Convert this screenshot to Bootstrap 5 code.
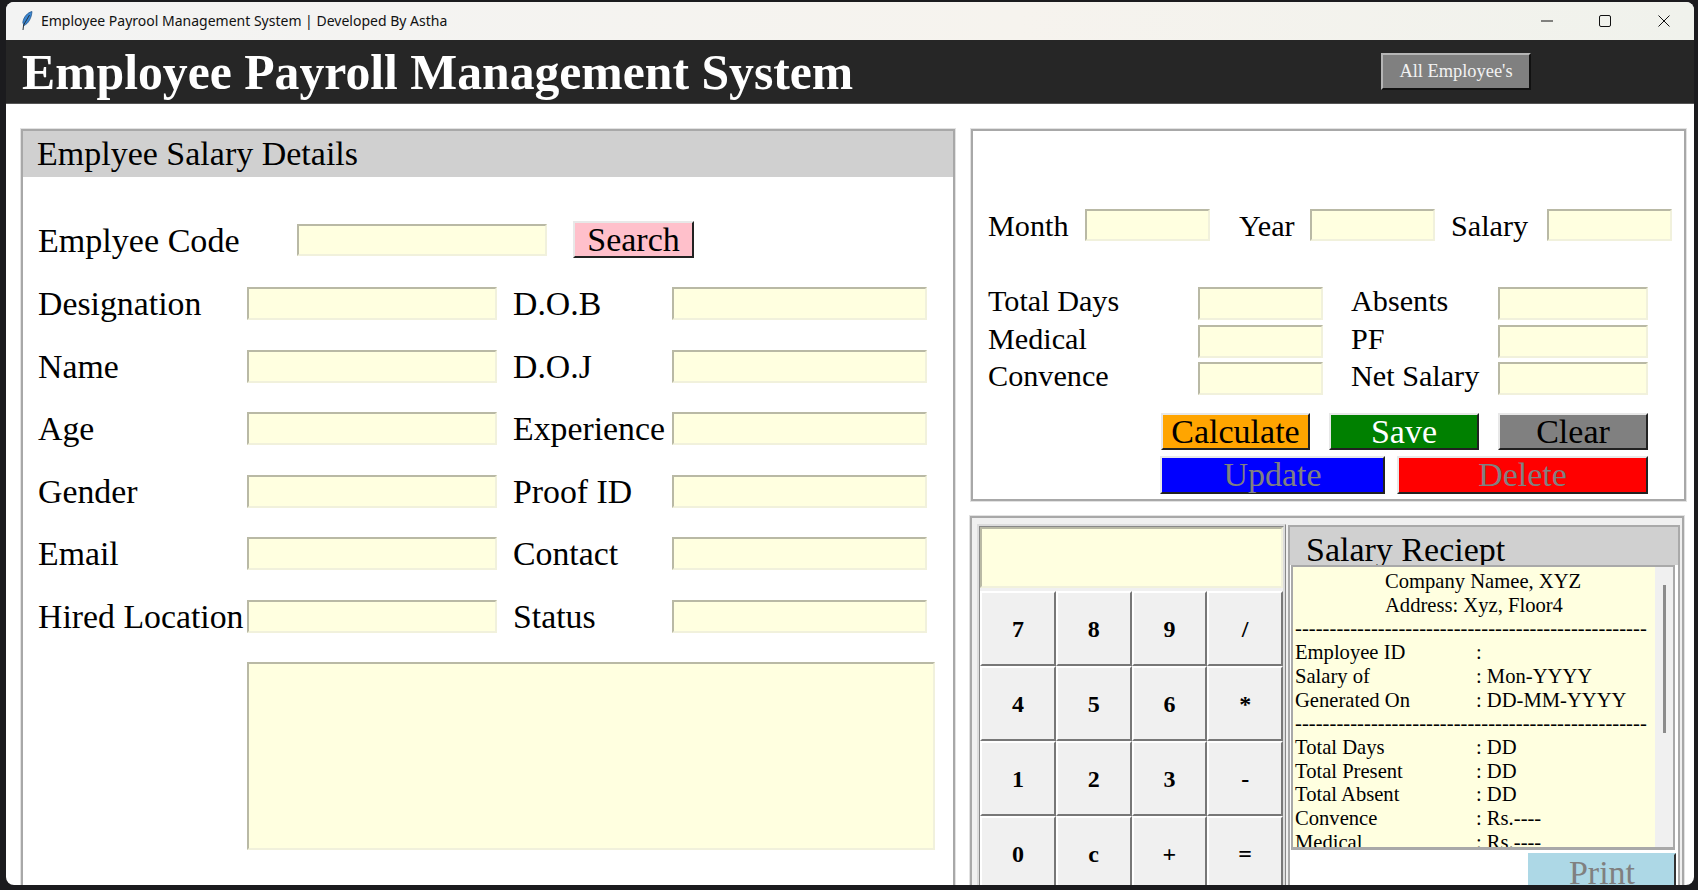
<!DOCTYPE html>
<html lang="en">

<head>
    <meta charset="UTF-8">
    <meta name="viewport" content="width=device-width, initial-scale=1.0">
    <title>Employee Payroll Management System</title>
    <link href="https://cdn.jsdelivr.net/npm/bootstrap@5.3.0/dist/css/bootstrap.min.css" rel="stylesheet">
    <style>
        html, body { height: 100%; }
        body {
            background: #1b1b1e;
            overflow: hidden;
            font-family: "Liberation Serif", "Times New Roman", serif;
            color: #000;
        }

        .app-window {
            margin: 2px 4px 0 6px;
            height: 883px;
            border-radius: 8px;
            overflow: hidden;
            background: #fff;
        }

        .title-strip {
            flex: none;
            height: 38px;
            padding-bottom: 1px;
            background: linear-gradient(90deg, #f3f3f3, #f6f3ee 60%, #f0f2ec);
            font: 14px "Noto Sans", "Liberation Sans", sans-serif;
            color: #111;
        }
        .title-text { margin-left: 8px; }
        .feather { margin-left: 15px; }
        .win-ctl { width: 58.5px; }
        .win-ctls { margin-right: 1px; }

        .top-band {
            flex: none;
            height: 64px;
            background: #262626;
            border-bottom: 1px solid #555;
        }
        .top-band h1 {
            font-family: "Liberation Serif", serif;
            font-size: 49.7px;
            font-weight: 700;
            line-height: 1;
            color: #fff;
            margin: 3px 0 0 16px;
        }

        .tk-btn {
            border-radius: 0;
            border-style: solid;
            border-width: 2px;
            border-color: #e8e8e8 #222 #222 #e8e8e8;
            padding: 0;
            font-size: 34px;
            line-height: 1;
            font-family: "Liberation Serif", serif;
        }
        .tk-btn-all {
            width: 150px;
            height: 37px;
            margin-right: 163px;
            background: #808080;
            color: #f2f2f2;
            font-size: 18.4px;
            border-color: #b5b5b5 #111 #111 #b5b5b5;
        }
        .tk-search { width: 121px; height: 37px; background: #ffc0cb; color: #000; margin-left: 26px; }
        .tk-calc { width: 149px; height: 37px; background: #ffa500; color: #000; }
        .tk-save { width: 150px; height: 37px; background: #008000; color: #fff; }
        .tk-clear { width: 150px; height: 37px; background: #808080; color: #000; }
        .tk-update { width: 225px; height: 38px; background: #0000ff; color: #808080; }
        .tk-delete { width: 251px; height: 38px; background: #ff0000; color: #808080; }
        .tk-print {
            width: 148px;
            height: 40px;
            background: #add8e6;
            color: #808080;
            border-color: #add8e6 #333 #333 #add8e6;
        }

        .main-area { flex: none; padding: 24px 0 0 14px; }

        .panel-box {
            border: 2px solid #a8a8a8;
            outline: 1px solid #e2e2e2;
            margin: 1px;
            background: #fff;
        }
        .panel-left { width: 934px; height: 778px; }
        .col-right { width: 717px; margin-left: 14px; }
        .panel-top { height: 372px; }
        .panel-bottom {
            width: 714px;
            height: 400px;
            margin: 15px 0 0;
            padding: 6px 2px 0 5px;
            background: #f0f0f0;
        }

        .panel-head {
            height: 46px;
            background: #d0d0d0;
            font-size: 34px;
            line-height: 46px;
            padding-left: 14px;
        }

        .yl-input {
            background: #ffffe0;
            border-style: solid;
            border-width: 2px;
            border-color: #b9b9a5 #f1f1dc #f1f1dc #b9b9a5;
            border-radius: 0;
            padding: 0;
            display: block;
        }
        .yl-input:focus { background: #ffffe0; border-color: #b9b9a5 #f1f1dc #f1f1dc #b9b9a5; box-shadow: none; }

        .lbl-lg { font-size: 33.8px; line-height: 33px; white-space: nowrap; }
        .lbl-md { font-size: 30.2px; line-height: 32px; white-space: nowrap; }

        .code-row { margin: 44px 0 0 15px; }
        .code-row .lbl-lg { width: 259px; font-size: 34.1px; padding-top: 2px; }
        .code-input { width: 250px; height: 32px; }

        .info-grid {
            display: grid;
            grid-template-columns: 209px 250px 175px 255px;
            grid-auto-rows: 33px;
            row-gap: 29.6px;
            margin: 29px 0 0 15px;
        }
        .info-grid .yl-input, .pay-grid .yl-input { width: 100%; height: 100%; }
        .info-grid .lbl-second { padding-left: 16px; }

        .note-area {
            width: 688px;
            height: 188px;
            margin: 29px 0 0 224px;
            resize: none;
        }

        .pay-body { padding: 78px 0 0 15px; }
        .month-row { height: 32px; }
        .month-row .yl-input { width: 125px; height: 32px; flex: none; }
        .month-row .lbl-md { padding-top: 2px; }
        .lbl-month { width: 97px; }
        .lbl-year { width: 71px; margin-left: 29px; }
        .lbl-salary { width: 96px; margin-left: 16px; }

        .pay-grid {
            display: grid;
            grid-template-columns: 210px 125px 175px 150px;
            grid-auto-rows: 33px;
            row-gap: 4.5px;
            margin-top: 46px;
        }
        .pay-grid .lbl-md { line-height: 28px; }
        .pay-grid .lbl-second { padding-left: 28px; }

        .btn-row-a { margin: 18px 0 0 173px; gap: 19px; }
        .btn-row-b { margin: 6px 0 0 172px; gap: 12px; }

        .calc-frame {
            width: 309px;
            flex: none;
            border: 3px ridge #dcdcdc;
            border-bottom: 0;
            height: 394px;
            overflow: hidden;
        }
        .calc-display { width: 303px; height: 61px; margin-bottom: 3px; }
        .calc-keys {
            display: grid;
            grid-template-columns: repeat(4, 75.75px);
            grid-auto-rows: 75px;
        }
        .calc-key {
            border-radius: 0;
            padding: 0;
            background: #f0f0f0;
            color: #000;
            font-family: "Liberation Serif", serif;
            font-size: 24px;
            font-weight: 700;
            border-style: solid;
            border-width: 2px;
            border-color: #fff #777 #777 #fff;
        }

        .receipt-frame {
            width: 392px;
            flex: none;
            margin-left: 2px;
            margin-top: 1px;
            border: 2px solid #a9a9a9;
            border-bottom: 0;
            background: #fff;
        }
        .receipt-head {
            height: 38px;
            background: #d0d0d0;
            font-size: 34px;
            line-height: 46px;
            padding-left: 16px;
            overflow: hidden;
        }
        .receipt-view {
            width: 384px;
            height: 285px;
            margin-left: 1px;
            border: 2px solid #a9a9a9;
            border-bottom-width: 3px;
        }
        .receipt-text {
            width: 362px;
            flex: none;
            background: #ffffe0;
            overflow: hidden;
            padding: 3px 0 0 2px;
            font-size: 20.6px;
            line-height: 23.7px;
            white-space: nowrap;
        }
        .rc-head { padding-left: 90px; }
        .rc-dash { letter-spacing: 0.04px; }
        .rc-label { width: 181px; flex: none; }
        .scroll-track { flex: 1; background: #f0f0f0; padding-top: 18px; }
        .scroll-thumb { width: 3px; height: 148px; background: #8c8c8c; margin: 0 auto; }
        .print-row { padding: 3px 2px 0 0; }
    </style>
</head>

<body>
    <div class="app-window d-flex flex-column">
        <div class="title-strip d-flex align-items-center">
            <svg class="feather" width="12" height="20" viewBox="0 0 12 20">
                <path d="M11 0.5C6.5 1.5 2.5 6 1.8 11.5L3 14.5C7.5 12.5 10.5 7 11 0.5Z" fill="#3b86d1" stroke="#1d4f85" stroke-width="0.7"/>
                <path d="M8.5 4L2.6 14L2 19" fill="none" stroke="#27323d" stroke-width="1"/>
            </svg>
            <span class="title-text">Employee Payrool Management System | Developed By Astha</span>
            <div class="win-ctls d-flex ms-auto">
                <div class="win-ctl d-flex justify-content-center">
                    <svg width="14" height="14" viewBox="0 0 14 14"><path d="M1 7H13" stroke="#111" stroke-width="1" fill="none"/></svg>
                </div>
                <div class="win-ctl d-flex justify-content-center">
                    <svg width="14" height="14" viewBox="0 0 14 14"><rect x="1.5" y="1.5" width="11" height="11" rx="1.5" stroke="#111" stroke-width="1" fill="none"/></svg>
                </div>
                <div class="win-ctl d-flex justify-content-center">
                    <svg width="14" height="14" viewBox="0 0 14 14"><path d="M1.5 1.5L12.5 12.5M12.5 1.5L1.5 12.5" stroke="#111" stroke-width="1" fill="none"/></svg>
                </div>
            </div>
        </div>

        <div class="top-band d-flex align-items-center justify-content-between">
            <h1>Employee Payroll Management System</h1>
            <button class="btn tk-btn tk-btn-all">All Employee's</button>
        </div>

        <div class="main-area d-flex">
            <!-- left form -->
            <div class="panel-box panel-left">
                <div class="panel-head">Emplyee Salary Details</div>
                <div class="code-row d-flex align-items-center">
                    <div class="lbl-lg">Emplyee Code</div>
                    <input class="form-control yl-input code-input" type="text">
                    <button class="btn tk-btn tk-search">Search</button>
                </div>
                <div class="info-grid">
                    <div class="lbl-lg">Designation</div><input class="form-control yl-input" type="text">
                    <div class="lbl-lg lbl-second">D.O.B</div><input class="form-control yl-input" type="text">
                    <div class="lbl-lg">Name</div><input class="form-control yl-input" type="text">
                    <div class="lbl-lg lbl-second">D.O.J</div><input class="form-control yl-input" type="text">
                    <div class="lbl-lg">Age</div><input class="form-control yl-input" type="text">
                    <div class="lbl-lg lbl-second">Experience</div><input class="form-control yl-input" type="text">
                    <div class="lbl-lg">Gender</div><input class="form-control yl-input" type="text">
                    <div class="lbl-lg lbl-second">Proof ID</div><input class="form-control yl-input" type="text">
                    <div class="lbl-lg">Email</div><input class="form-control yl-input" type="text">
                    <div class="lbl-lg lbl-second">Contact</div><input class="form-control yl-input" type="text">
                    <div class="lbl-lg">Hired Location</div><input class="form-control yl-input" type="text">
                    <div class="lbl-lg lbl-second">Status</div><input class="form-control yl-input" type="text">
                </div>
                <textarea class="form-control yl-input note-area"></textarea>
            </div>

            <div class="col-right">
                <!-- salary calc -->
                <div class="panel-box panel-top">
                    <div class="pay-body">
                        <div class="month-row d-flex align-items-center">
                            <div class="lbl-md lbl-month">Month</div>
                            <input class="form-control yl-input" type="text">
                            <div class="lbl-md lbl-year">Year</div>
                            <input class="form-control yl-input" type="text">
                            <div class="lbl-md lbl-salary">Salary</div>
                            <input class="form-control yl-input" type="text">
                        </div>
                        <div class="pay-grid">
                            <div class="lbl-md">Total Days</div><input class="form-control yl-input" type="text">
                            <div class="lbl-md lbl-second">Absents</div><input class="form-control yl-input" type="text">
                            <div class="lbl-md">Medical</div><input class="form-control yl-input" type="text">
                            <div class="lbl-md lbl-second">PF</div><input class="form-control yl-input" type="text">
                            <div class="lbl-md">Convence</div><input class="form-control yl-input" type="text">
                            <div class="lbl-md lbl-second">Net Salary</div><input class="form-control yl-input" type="text">
                        </div>
                        <div class="btn-row-a d-flex">
                            <button class="btn tk-btn tk-calc">Calculate</button>
                            <button class="btn tk-btn tk-save">Save</button>
                            <button class="btn tk-btn tk-clear">Clear</button>
                        </div>
                        <div class="btn-row-b d-flex">
                            <button class="btn tk-btn tk-update">Update</button>
                            <button class="btn tk-btn tk-delete">Delete</button>
                        </div>
                    </div>
                </div>

                <!-- calculator + receipt -->
                <div class="panel-box panel-bottom d-flex">
                    <div class="calc-frame">
                        <input class="form-control yl-input calc-display" type="text">
                        <div class="calc-keys">
                            <button class="calc-key">7</button><button class="calc-key">8</button><button class="calc-key">9</button><button class="calc-key">/</button>
                            <button class="calc-key">4</button><button class="calc-key">5</button><button class="calc-key">6</button><button class="calc-key">*</button>
                            <button class="calc-key">1</button><button class="calc-key">2</button><button class="calc-key">3</button><button class="calc-key">-</button>
                            <button class="calc-key">0</button><button class="calc-key">c</button><button class="calc-key">+</button><button class="calc-key">=</button>
                        </div>
                    </div>
                    <div class="receipt-frame">
                        <div class="receipt-head">Salary Reciept</div>
                        <div class="receipt-view d-flex">
                            <div class="receipt-text">
                                <div class="rc-head">Company Namee, XYZ</div>
                                <div class="rc-head">Address: Xyz, Floor4</div>
                                <div class="rc-dash">---------------------------------------------------</div>
                                <div class="d-flex"><span class="rc-label">Employee ID</span><span>:</span></div>
                                <div class="d-flex"><span class="rc-label">Salary of</span><span>: Mon-YYYY</span></div>
                                <div class="d-flex"><span class="rc-label">Generated On</span><span>: DD-MM-YYYY</span></div>
                                <div class="rc-dash">---------------------------------------------------</div>
                                <div class="d-flex"><span class="rc-label">Total Days</span><span>: DD</span></div>
                                <div class="d-flex"><span class="rc-label">Total Present</span><span>: DD</span></div>
                                <div class="d-flex"><span class="rc-label">Total Absent</span><span>: DD</span></div>
                                <div class="d-flex"><span class="rc-label">Convence</span><span>: Rs.----</span></div>
                                <div class="d-flex"><span class="rc-label">Medical</span><span>: Rs.----</span></div>
                            </div>
                            <div class="scroll-track"><div class="scroll-thumb"></div></div>
                        </div>
                        <div class="print-row d-flex justify-content-end">
                            <button class="btn tk-btn tk-print">Print</button>
                        </div>
                    </div>
                </div>
            </div>
        </div>
    </div>

    <script src="https://cdn.jsdelivr.net/npm/bootstrap@5.3.0/dist/js/bootstrap.bundle.min.js"></script>
</body>

</html>
